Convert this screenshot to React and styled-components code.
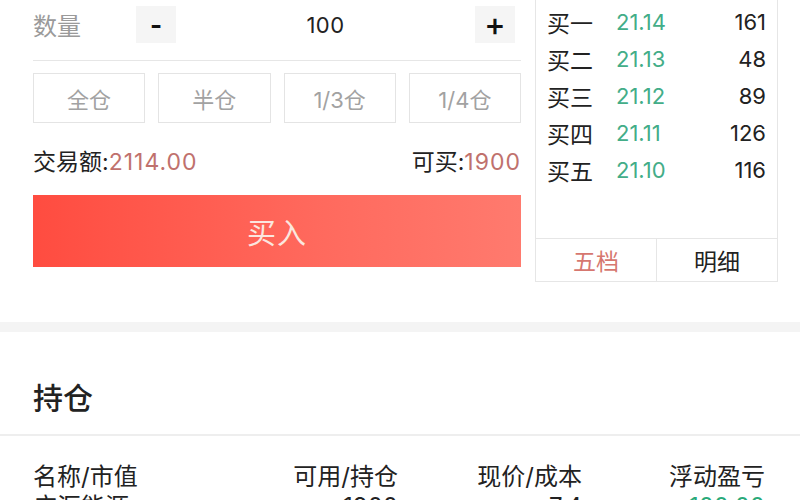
import React from "react";
import styled, { createGlobalStyle } from "styled-components";

const Global = createGlobalStyle`
  html, body { margin: 0; padding: 0; background: #fff; }
  body {
    width: 800px; height: 500px; overflow: hidden;
    font-family: "Inter", "Noto Sans CJK SC", sans-serif;
    color: #222;
  }
`;

const Top = styled.div`
  display: flex;
  height: 322px;
  padding-left: 33px;
  overflow: hidden;
`;

const Left = styled.div`
  width: 488px;
  display: flex;
  flex-direction: column;
  padding-top: 6px;
`;

const QtyRow = styled.div`
  display: flex;
  align-items: center;
  height: 37px;
`;

const QtyLabel = styled.div`
  width: 103px;
  font-size: 24px;
  color: #9a9a9a;
`;

const StepBtn = styled.div`
  width: 40px;
  height: 37px;
  background: #f5f5f5;
  display: flex;
  align-items: center;
  justify-content: center;
  font-size: ${(p) => (p.$plus ? "32px" : "26px")};
  font-weight: ${(p) => (p.$plus ? 500 : 700)};
  color: #111;
  margin-right: ${(p) => (p.$plus ? "6px" : "0")};
`;

const QtyValue = styled.div`
  flex: 1;
  text-align: center;
  font-size: 22px;
  letter-spacing: 0.5px;
  color: #222;
`;

const Divider = styled.div`
  margin-top: 17px;
  height: 1px;
  background: #e6e6e6;
`;

const Chips = styled.div`
  margin-top: 12px;
  display: flex;
  gap: 13px;
`;

const Chip = styled.div`
  flex: 1;
  height: 48px;
  border: 1px solid #e4e4e4;
  display: flex;
  align-items: center;
  justify-content: center;
  font-size: 22px;
  color: #a2a2a2;
`;

const InfoRow = styled.div`
  margin-top: 22px;
  height: 30px;
  display: flex;
  justify-content: space-between;
  align-items: center;
  font-size: 23px;
`;

const InfoItem = styled.div`
  color: #222;
  span { color: #c0716d; letter-spacing: 1px; }
`;

const BuyBtn = styled.div`
  margin-top: 20px;
  height: 72px;
  background: linear-gradient(90deg, #ff4c40 0%, #ff6a5e 60%, #ff7a6e 100%);
  display: flex;
  align-items: center;
  justify-content: center;
  font-size: 29px;
  color: #fbe6df;
  letter-spacing: 1px;
`;

const Book = styled.div`
  margin-left: 14px;
  width: 241px;
  height: 281px;
  border: 1px solid #e6e6e6;
  border-top: none;
  display: flex;
  flex-direction: column;
`;

const Levels = styled.div`
  flex: 1;
  padding: 3px 11px 0 11px;
`;

const Level = styled.div`
  height: 37px;
  display: flex;
  align-items: center;
  font-size: 23px;
`;

const LevelName = styled.div`
  width: 69px;
  color: #222;
`;

const LevelPrice = styled.div`
  flex: 1;
  font-size: 22px;
  color: #43ad88;
`;

const LevelVol = styled.div`
  font-size: 22px;
  color: #222;
`;

const Tabs = styled.div`
  height: 42px;
  border-top: 1px solid #e6e6e6;
  display: flex;
`;

const Tab = styled.div`
  flex: 1;
  display: flex;
  align-items: center;
  justify-content: center;
  font-size: 23px;
  color: ${(p) => (p.$active ? "#d6776f" : "#222")};
  & + & { border-left: 1px solid #e6e6e6; }
`;

const Band = styled.div`
  height: 10px;
  background: #f4f4f4;
`;

const Section = styled.div`
  height: 104px;
  padding-left: 33px;
  display: flex;
  align-items: center;
  padding-top: 26px;
  box-sizing: border-box;
  font-size: 30px;
  font-weight: 500;
  color: #222;
  border-bottom: 2px solid #eeeeee;
`;

const Grid = styled.div`
  display: grid;
  grid-template-columns: 245px 120px 184px 183px;
  padding-left: 33px;
  padding-top: 26px;
  font-size: 24px;
  line-height: 30px;
`;

const Cell = styled.div`
  text-align: ${(p) => (p.$left ? "left" : "right")};
  color: ${(p) => (p.$green ? "#2aaa7a" : "#222")};
`;

const levels = [
  ["买一", "21.14", "161"],
  ["买二", "21.13", "48"],
  ["买三", "21.12", "89"],
  ["买四", "21.11", "126"],
  ["买五", "21.10", "116"],
];

export default function App() {
  return (
    <>
      <Global />
      <Top>
        <Left>
          <QtyRow>
            <QtyLabel>数量</QtyLabel>
            <StepBtn>-</StepBtn>
            <QtyValue>100</QtyValue>
            <StepBtn $plus>+</StepBtn>
          </QtyRow>
          <Divider />
          <Chips>
            <Chip>全仓</Chip>
            <Chip>半仓</Chip>
            <Chip>1/3仓</Chip>
            <Chip>1/4仓</Chip>
          </Chips>
          <InfoRow>
            <InfoItem>交易额:<span>2114.00</span></InfoItem>
            <InfoItem>可买:<span>1900</span></InfoItem>
          </InfoRow>
          <BuyBtn>买入</BuyBtn>
        </Left>
        <Book>
          <Levels>
            {levels.map(([n, p, v]) => (
              <Level key={n}>
                <LevelName>{n}</LevelName>
                <LevelPrice>{p}</LevelPrice>
                <LevelVol>{v}</LevelVol>
              </Level>
            ))}
          </Levels>
          <Tabs>
            <Tab $active>五档</Tab>
            <Tab>明细</Tab>
          </Tabs>
        </Book>
      </Top>
      <Band />
      <Section>持仓</Section>
      <Grid>
        <Cell $left>名称/市值</Cell>
        <Cell>可用/持仓</Cell>
        <Cell>现价/成本</Cell>
        <Cell>浮动盈亏</Cell>
        <Cell $left>广汇能源</Cell>
        <Cell>1900</Cell>
        <Cell>7.4</Cell>
        <Cell $green>100.00</Cell>
      </Grid>
    </>
  );
}
